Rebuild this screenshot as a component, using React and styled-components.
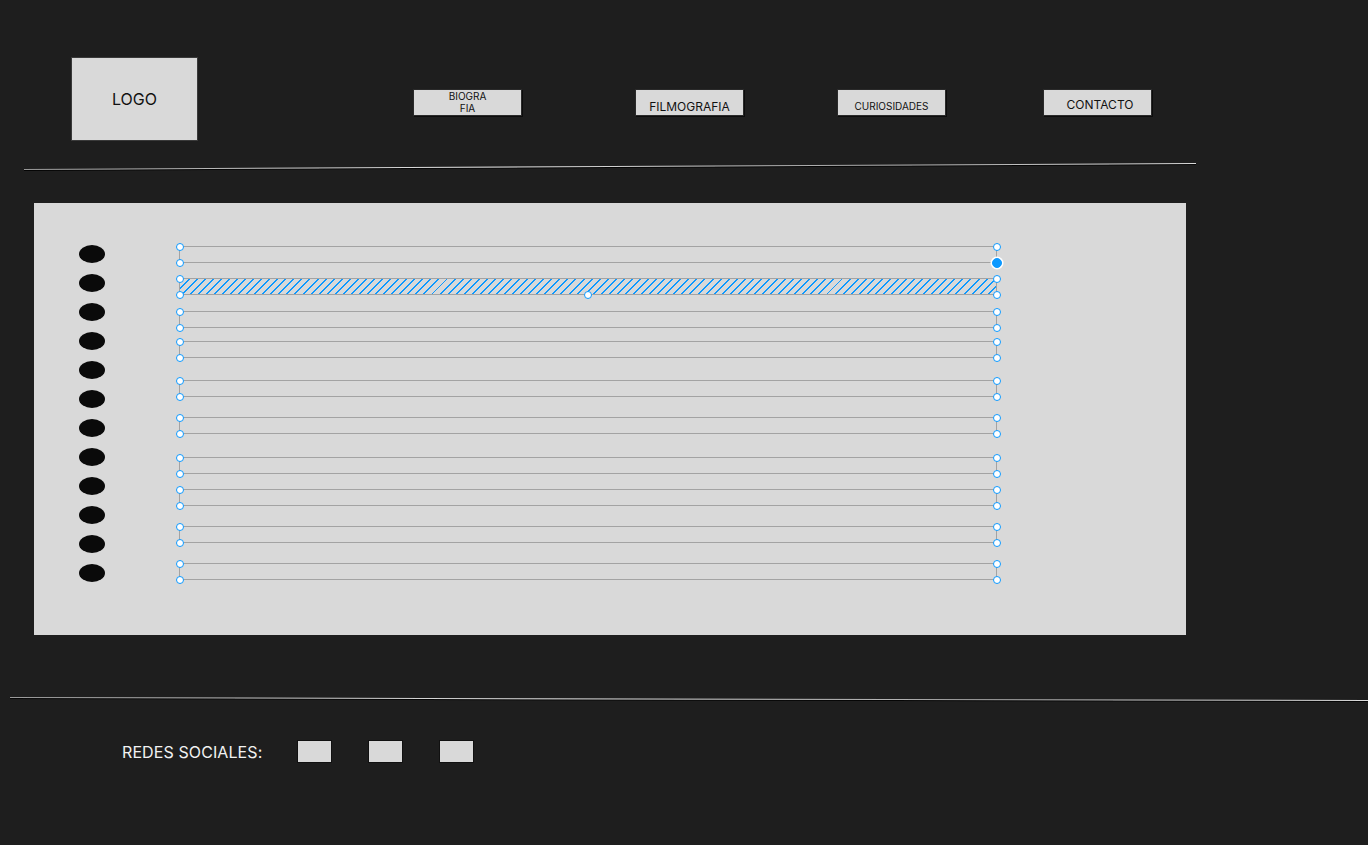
import styled, { createGlobalStyle, css } from "styled-components";

const GlobalStyle = createGlobalStyle`
  html, body {
    margin: 0;
    padding: 0;
    background: #1e1e1e;
  }
  * {
    box-sizing: border-box;
  }
`;

const navItems = [
  { label: ["BIOGRA", "FIA"], offset: 215, size: 10, pad: 0, shift: 0 },
  { label: ["FILMOGRAFIA"], offset: 113, size: 12, pad: 10, shift: -2 },
  { label: ["CURIOSIDADES"], offset: 93, size: 10, pad: 10, shift: 0 },
  { label: ["CONTACTO"], offset: 97, size: 12, pad: 8, shift: 5 },
];

// top of each pair relative to the previous pair's bottom
const pairs = [
  { gap: 0 },
  { gap: 15, hatched: true },
  { gap: 16 },
  { gap: 13 },
  { gap: 22 },
  { gap: 20 },
  { gap: 23 },
  { gap: 15 },
  { gap: 20 },
  { gap: 20 },
];

const dots = Array.from({ length: 12 });

const App = () => {
  return (
    <Page>
      <GlobalStyle />
      <Header>
        <Logo>LOGO</Logo>
        <Nav>
          {navItems.map((item) => (
            <NavButton
              key={item.label.join("")}
              $offset={item.offset}
              $size={item.size}
              $pad={item.pad}
              $shift={item.shift}
            >
              {item.label.map((l) => (
                <span key={l}>{l}</span>
              ))}
            </NavButton>
          ))}
        </Nav>
      </Header>

      <Divider $left={24} $width={1172} $angle={-0.29} $top={28} />

      <Panel>
        <DotColumn>
          {dots.map((_, i) => (
            <Dot key={i} />
          ))}
        </DotColumn>
        <LineGroup>
          {pairs.map((p, i) => (
            <LinePair key={i} $gap={p.gap} $hatched={p.hatched}>
              <Handle $x="left" $y="top" />
              <Handle $x="right" $y="top" />
              <Handle $x="left" $y="bottom" />
              <Handle $x="right" $y="bottom" $active={i === 0} />
              {p.hatched && <Handle $x="center" $y="bottom" />}
            </LinePair>
          ))}
        </LineGroup>
      </Panel>

      <Divider $left={10} $width={1358} $angle={0.13} $top={62} />

      <Footer>
        <FooterLabel>REDES SOCIALES:</FooterLabel>
        <Social />
        <Social />
        <Social />
      </Footer>
    </Page>
  );
};

export default App;

const Page = styled.div`
  width: 1368px;
  height: 845px;
  background: #1e1e1e;
  font-family: Inter, "Liberation Sans", sans-serif;
  overflow: hidden;
`;

const Header = styled.header`
  display: flex;
  align-items: flex-start;
  padding: 57px 0 0 71px;
`;

const Logo = styled.div`
  width: 127px;
  height: 84px;
  background: #d9d9d9;
  border: 1px solid #3a3a3a;
  display: flex;
  align-items: center;
  justify-content: center;
  font-size: 16px;
  color: #111;
`;

const Nav = styled.nav`
  display: flex;
  margin-top: 32px;
`;

const NavButton = styled.div`
  width: 109px;
  height: 27px;
  margin-left: ${(p) => p.$offset}px;
  background: #d9d9d9;
  border: 1px solid #2a2a2a;
  box-shadow: 1px 1px 0 #0c0c0c;
  display: flex;
  flex-direction: column;
  align-items: center;
  padding-top: ${(p) => p.$pad}px;
  padding-left: ${(p) => p.$shift}px;
  font-size: ${(p) => p.$size}px;
  line-height: ${(p) => (p.$size === 10 ? 12 : 14)}px;
  color: #111;
  span {
    display: block;
  }
`;

const Divider = styled.div`
  width: ${(p) => p.$width}px;
  height: 1px;
  margin-left: ${(p) => p.$left}px;
  margin-top: ${(p) => p.$top}px;
  background: linear-gradient(90deg, #9a9a9a, #e6e6e6 40%, #a8a8a8 70%, #dcdcdc);
  box-shadow: 0 1px 0 #050505;
  transform: rotate(${(p) => p.$angle}deg);
  transform-origin: left center;
`;

const Panel = styled.main`
  width: 1152px;
  height: 432px;
  margin: 33px 0 0 34px;
  background: #d9d9d9;
  display: flex;
  align-items: flex-start;
  padding: 42px 0 0 45px;
`;

const DotColumn = styled.div`
  display: flex;
  flex-direction: column;
  gap: 11px;
`;

const Dot = styled.div`
  width: 26px;
  height: 18px;
  border-radius: 50%;
  background: #0a0a0a;
`;

const LineGroup = styled.div`
  width: 818px;
  margin-left: 74px;
  margin-top: 1px;
  display: flex;
  flex-direction: column;
`;

const LinePair = styled.div`
  position: relative;
  height: 17px;
  margin-top: ${(p) => p.$gap}px;
  border: 1px solid #a3a3a3;
  ${(p) =>
    p.$hatched &&
    css`
      background: repeating-linear-gradient(
        135deg,
        #0d99ff 0 1.4px,
        transparent 1.4px 5.7px
      );
    `}
`;

const Handle = styled.span`
  position: absolute;
  width: 8px;
  height: 8px;
  border-radius: 50%;
  background: ${(p) => (p.$active ? "#0d99ff" : "#fff")};
  border: 1.5px solid #0d99ff;
  ${(p) => (p.$active ? "box-shadow: 0 0 0 1.5px #fff;" : "")}
  ${(p) => (p.$y === "top" ? "top: -4.5px;" : "bottom: -4.5px;")}
  ${(p) =>
    p.$x === "left"
      ? "left: -4.5px;"
      : p.$x === "right"
      ? "right: -4.5px;"
      : "left: calc(50% - 4px);"}
  ${(p) =>
    p.$active &&
    css`
      width: 10px;
      height: 10px;
      right: -5.5px;
      bottom: -5.5px;
    `}
`;

const Footer = styled.footer`
  display: flex;
  align-items: center;
  margin-top: 42px;
  padding-left: 122px;
`;

const FooterLabel = styled.span`
  font-size: 16px;
  color: #f2f2f2;
  margin-right: 35px;
  letter-spacing: 0.1px;
`;

const Social = styled.div`
  width: 35px;
  height: 23px;
  background: #d9d9d9;
  border: 1px solid #111;
  & + & {
    margin-left: 36px;
  }
`;
